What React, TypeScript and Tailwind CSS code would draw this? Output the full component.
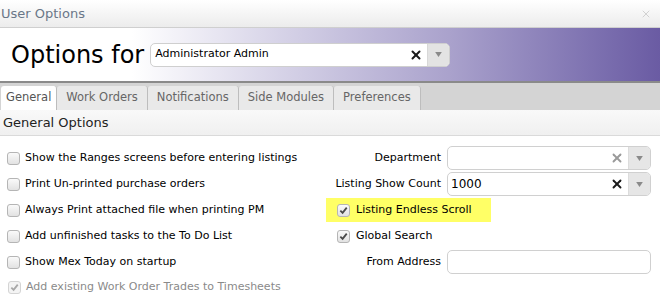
import { X } from 'lucide-react'

const leftOptions = [
  { label: 'Show the Ranges screens before entering listings', checked: false },
  { label: 'Print Un-printed purchase orders', checked: false },
  { label: 'Always Print attached file when printing PM', checked: false },
  { label: 'Add unfinished tasks to the To Do List', checked: false },
  { label: 'Show Mex Today on startup', checked: false },
]

const tabs = ['General', 'Work Orders', 'Notifications', 'Side Modules', 'Preferences']

function Box({ checked, disabled }: { checked?: boolean; disabled?: boolean }) {
  return (
    <span
      className={`flex h-[13px] w-[13px] shrink-0 items-center justify-center rounded-[3px] border ${
        disabled ? 'border-[#d4d4d4] bg-[#f4f4f4]' : 'border-[#b5b5b5] bg-gradient-to-b from-[#fafafa] to-[#e2e2e2]'
      }`}
    >
      {checked && (
        <svg viewBox="0 0 10 10" className="h-[9px] w-[9px]">
          <path d="M1.5 5.2 L4 7.6 L8.6 1.8" fill="none" stroke={disabled ? '#a8a8a8' : '#4a4a4a'} strokeWidth="2" />
        </svg>
      )}
    </span>
  )
}

function Caret() {
  return (
    <svg viewBox="0 0 8 6" className="h-[5px] w-[7px]">
      <path d="M0 0 H8 L4 6 Z" fill="#8a8a8a" />
    </svg>
  )
}

function Combo({ value, clear, dimClear, width }: { value?: string; clear?: boolean; dimClear?: boolean; width: string }) {
  return (
    <div className={`flex h-[24px] ${width} overflow-hidden rounded-[5px] border border-[#d0d0d0] bg-white`}>
      <div className="flex flex-1 items-center pl-[3px] text-[12px] text-black">{value}</div>
      {clear && (
        <div className="flex w-[22px] items-center justify-center">
          <X className={`h-[14px] w-[14px] ${dimClear ? 'text-[#9a9a9a]' : 'text-[#1a1a1a]'}`} strokeWidth={3.2} />
        </div>
      )}
      <div className="flex w-[22px] items-center justify-center border-l border-[#dcdcdc] bg-[#e6e6e6]">
        <Caret />
      </div>
    </div>
  )
}

export default function App() {
  return (
    <div className="h-[300px] w-[660px] overflow-hidden bg-white font-['DejaVu_Sans',sans-serif]">
      {/* Title bar */}
      <div className="flex h-[28px] items-center justify-between border-b border-[#cfcfcf] bg-gradient-to-b from-white to-[#ececec] pl-[1px] pr-[8px]">
        <span className="text-[13px] text-[#6a7788]">User Options</span>
        <X className="h-[12px] w-[12px] text-[#b8b8b8]" strokeWidth={1.2} />
      </div>

      {/* Header */}
      <div className="flex h-[55px] items-center border-b-2 border-[#8a8a8a] bg-gradient-to-r from-white from-[20%] via-[#aaa2cc] via-[68%] to-[#6a5ba3] pl-[11px]">
        <span className="text-[24px] leading-none text-black">Options for</span>
        <div className="ml-[6px] flex h-[24px] w-[300px] overflow-hidden rounded-[5px] border border-[#cfcfcf] bg-white">
          <div className="flex flex-1 items-center pl-[4px] text-[11px] text-black">Administrator Admin</div>
          <div className="flex w-[22px] items-center justify-center">
            <X className="h-[14px] w-[14px] text-[#1a1a1a]" strokeWidth={3.4} />
          </div>
          <div className="flex w-[22px] items-center justify-center border-l border-[#d8d8d8] bg-[#e3e3e3]">
            <Caret />
          </div>
        </div>
      </div>

      {/* Tabs */}
      <div className="flex h-[27px] items-end bg-[#d4d4d4] pl-[1px]">
        {tabs.map((t, i) => (
          <div
            key={t}
            className={`flex h-[24px] items-center rounded-t-[3px] border-r border-[#bdbdbd] text-[11.5px] ${
              i === 0 ? 'bg-white px-[5px] text-[#555]' : 'bg-[#e9e9e9] px-[9px] text-[#666]'
            }`}
          >
            {t}
          </div>
        ))}
      </div>

      {/* Section header */}
      <div className="flex h-[26px] items-center border-b border-[#dadada] bg-gradient-to-b from-[#f9f9f9] to-[#f0f0f0] pl-[3px] text-[13px] text-[#222]">
        General Options
      </div>

      {/* Body */}
      <div className="flex pt-[9px]">
        <div className="flex w-[326px] flex-col pl-[7px]">
          {leftOptions.map((o) => (
            <div key={o.label} className="flex h-[26px] items-center gap-[5px] text-[11px] text-black">
              <Box checked={o.checked} />
              <span>{o.label}</span>
            </div>
          ))}
          <div className="flex h-[24px] items-center gap-[5px] pl-[1px] text-[11px] text-[#8a8a8a]">
            <Box checked disabled />
            <span>Add existing Work Order Trades to Timesheets</span>
          </div>
        </div>

        <div className="flex flex-1 flex-col text-[11px] text-black">
          <div className="flex h-[26px] items-center">
            <span className="w-[121px] pr-[6px] text-right">Department</span>
            <Combo clear dimClear width="w-[204px]" />
          </div>
          <div className="flex h-[26px] items-center">
            <span className="w-[121px] pr-[6px] text-right">Listing Show Count</span>
            <Combo value="1000" clear width="w-[204px]" />
          </div>
          <div className="flex h-[26px] items-center">
            <div className="flex h-[24px] w-[165px] items-center gap-[6px] bg-[#ffff66] pl-[11px]">
              <Box checked />
              <span>Listing Endless Scroll</span>
            </div>
          </div>
          <div className="flex h-[26px] items-center gap-[6px] pl-[11px]">
            <Box checked />
            <span>Global Search</span>
          </div>
          <div className="flex h-[26px] items-center">
            <span className="w-[121px] pr-[6px] text-right">From Address</span>
            <div className="h-[24px] w-[204px] rounded-[5px] border border-[#d0d0d0] bg-white" />
          </div>
        </div>
      </div>
    </div>
  )
}
